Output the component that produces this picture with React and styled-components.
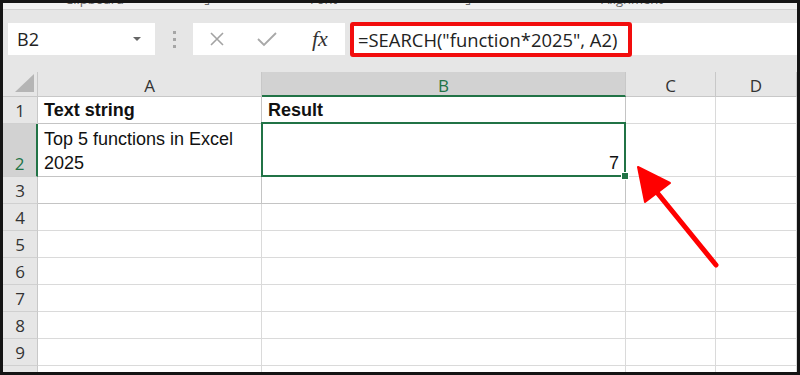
import React from "react";
import styled, { createGlobalStyle } from "styled-components";

const GlobalStyle = createGlobalStyle`
  html, body {
    margin: 0;
    padding: 0;
    background: #ffffff;
  }
`;

const GREEN = "#217346";

const Frame = styled.div`
  position: relative;
  width: 800px;
  height: 375px;
  box-sizing: border-box;
  border: 3px solid #141414;
  background: #e6e6e6;
  overflow: hidden;
  display: flex;
  flex-direction: column;
`;

const RibbonStrip = styled.div`
  height: 6px;
  flex: none;
  background: #f1f1f1;
  border-bottom: 1px solid #d2d2d2;
  overflow: hidden;
  display: flex;
  font-family: "Open Sans", "Noto Sans", sans-serif;
  font-size: 13px;
  color: #666;
`;

const RibbonLabel = styled.span`
  margin-left: ${(p) => p.left}px;
  line-height: 13px;
  transform: translateY(-10px);
  white-space: nowrap;
`;

const FormulaBar = styled.div`
  height: 62px;
  flex: none;
  display: flex;
  align-items: center;
  padding: 0 0 4px 5px;
  box-sizing: border-box;
`;

const NameBox = styled.div`
  width: 147px;
  height: 32px;
  background: #fff;
  display: flex;
  align-items: center;
  justify-content: space-between;
  padding: 0 14px 0 9px;
  box-sizing: border-box;
  font-family: "Open Sans", "Noto Sans", sans-serif;
  font-size: 18px;
  color: #222;
`;

const Chevron = styled.span`
  width: 0;
  height: 0;
  border-left: 4px solid transparent;
  border-right: 4px solid transparent;
  border-top: 4px solid #666;
`;

const Grip = styled.div`
  width: 38px;
  display: flex;
  flex-direction: column;
  align-items: center;
  gap: 4px;
`;

const GripDot = styled.span`
  width: 3px;
  height: 3px;
  background: #a6a6a6;
`;

const FuncBox = styled.div`
  width: 152px;
  height: 32px;
  background: #fff;
  display: flex;
  align-items: center;
  padding-left: 16px;
  box-sizing: border-box;
  gap: 32px;
`;

const Fx = styled.span`
  font-family: "Liberation Serif", "DejaVu Serif", serif;
  font-style: italic;
  font-size: 22px;
  color: #333;
  margin-left: 3px;
`;

const FormulaInput = styled.div`
  flex: 1;
  height: 32px;
  margin-left: 5px;
  background: #fff;
  display: flex;
  align-items: center;
`;

const Highlight = styled.div`
  width: 282px;
  height: 35px;
  box-sizing: border-box;
  border: 4px solid #f20d0d;
  border-radius: 3px;
  display: flex;
  align-items: center;
  padding-left: 4px;
  font-family: "Open Sans", "Noto Sans", sans-serif;
  font-size: 18.4px;
  color: #222;
  white-space: nowrap;
`;

const Sheet = styled.div`
  flex: 1;
  display: grid;
  grid-template-columns: 35px 224px 364px 90px 1fr;
  grid-template-rows: 25px 27px 53px repeat(7, 27px) 1fr;
  background: #fff;
`;

const Corner = styled.div`
  background: #e6e6e6;
  border-right: 1px solid #c8c8c8;
  border-bottom: 1px solid #c8c8c8;
  display: flex;
  align-items: flex-end;
  justify-content: flex-end;
  padding: 0 3px 4px 0;
`;

const ColHead = styled.div`
  background: ${(p) => (p.active ? "#d2d2d2" : "#e6e6e6")};
  border-right: 1px solid #c8c8c8;
  border-bottom: ${(p) => (p.active ? `2px solid ${GREEN}` : "1px solid #c8c8c8")};
  display: flex;
  align-items: center;
  justify-content: center;
  font-family: "Open Sans", "Noto Sans", sans-serif;
  font-size: 17px;
  color: ${(p) => (p.active ? GREEN : "#333")};
  box-sizing: border-box;
  padding-top: 3px;
`;

const RowHead = styled.div`
  background: ${(p) => (p.active ? "#d2d2d2" : "#e6e6e6")};
  border-right: ${(p) => (p.active ? `2px solid ${GREEN}` : "1px solid #c8c8c8")};
  border-bottom: 1px solid #d0d0d0;
  display: flex;
  align-items: flex-end;
  justify-content: center;
  font-family: "Open Sans", "Noto Sans", sans-serif;
  font-size: 17px;
  line-height: 25px;
  color: ${(p) => (p.active ? GREEN : "#333")};
  box-sizing: border-box;
  overflow: hidden;
`;

const Cell = styled.div`
  position: relative;
  border-right: 1px solid ${(p) => (p.framed ? "#c4c4c4" : "#dadada")};
  border-bottom: 1px solid ${(p) => (p.framed ? "#c4c4c4" : "#dadada")};
  box-sizing: border-box;
  display: flex;
  align-items: flex-end;
  justify-content: ${(p) => (p.right ? "flex-end" : "flex-start")};
  padding: 0 6px 1px 6px;
  font-family: "Liberation Sans", Arial, sans-serif;
  font-size: 18px;
  line-height: 24px;
  font-weight: ${(p) => (p.bold ? 700 : 400)};
  color: #111;

  ${(p) =>
    p.selected &&
    `
    &::after {
      content: "";
      position: absolute;
      left: -1px;
      top: -2px;
      right: -1px;
      bottom: -1px;
      border: 2px solid ${GREEN};
    }
    &::before {
      content: "";
      position: absolute;
      right: -4px;
      bottom: -4px;
      width: 6px;
      height: 6px;
      background: ${GREEN};
      border: 1px solid #fff;
      z-index: 2;
    }
  `}
`;

const ArrowLayer = styled.svg`
  position: absolute;
  left: -3px;
  top: -3px;
  pointer-events: none;
`;

const columns = ["A", "B", "C", "D"];

const data = {
  1: { A: { text: "Text string", bold: true }, B: { text: "Result", bold: true } },
  2: { A: { text: "Top 5 functions in Excel 2025" }, B: { text: "7", right: true, selected: true } },
};

function XIcon() {
  return (
    <svg width="16" height="16" viewBox="0 0 16 16">
      <path d="M2 2 L14 14 M14 2 L2 14" stroke="#a3a3a3" strokeWidth="1.6" fill="none" />
    </svg>
  );
}

function CheckIcon() {
  return (
    <svg width="20" height="16" viewBox="0 0 20 16">
      <path d="M1 8 L7 14 L19 2" stroke="#a8a8a8" strokeWidth="1.8" fill="none" />
    </svg>
  );
}

function SelectAll() {
  return (
    <svg width="19" height="18" viewBox="0 0 19 18">
      <polygon points="19,0 19,18 0,18" fill="#b5b5b5" />
    </svg>
  );
}

function App() {
  const rows = [1, 2, 3, 4, 5, 6, 7, 8, 9, 10];
  return (
    <>
      <GlobalStyle />
      <Frame>
        <RibbonStrip>
          <RibbonLabel left={62}>Clipboard</RibbonLabel>
          <RibbonLabel left={80}>⌟</RibbonLabel>
          <RibbonLabel left={100}>Font</RibbonLabel>
          <RibbonLabel left={128}>⌟</RibbonLabel>
          <RibbonLabel left={130}>Alignment</RibbonLabel>
        </RibbonStrip>
        <FormulaBar>
          <NameBox>
            B2
            <Chevron />
          </NameBox>
          <Grip>
            <GripDot />
            <GripDot />
            <GripDot />
          </Grip>
          <FuncBox>
            <XIcon />
            <CheckIcon />
            <Fx>fx</Fx>
          </FuncBox>
          <FormulaInput>
            <Highlight>=SEARCH("function*2025", A2)</Highlight>
          </FormulaInput>
        </FormulaBar>
        <Sheet>
          <Corner>
            <SelectAll />
          </Corner>
          {columns.map((c) => (
            <ColHead key={c} active={c === "B"}>
              {c}
            </ColHead>
          ))}
          {rows.map((r) => (
            <React.Fragment key={r}>
              <RowHead active={r === 2}>{r}</RowHead>
              {columns.map((c) => {
                const cell = (data[r] && data[r][c]) || {};
                return (
                  <Cell
                    key={c}
                    framed={r <= 3 && (c === "A" || c === "B")}
                    bold={cell.bold}
                    right={cell.right}
                    selected={cell.selected}
                  >
                    {cell.text}
                  </Cell>
                );
              })}
            </React.Fragment>
          ))}
        </Sheet>
        <ArrowLayer width="800" height="375" viewBox="0 0 800 375">
          <line x1="716" y1="265" x2="655" y2="190" stroke="#f00" strokeWidth="5" strokeLinecap="round" />
          <polygon points="638,167 645,202 670,183" fill="#f00" stroke="#f00" strokeWidth="2" strokeLinejoin="round" />
        </ArrowLayer>
      </Frame>
    </>
  );
}

export default App;
